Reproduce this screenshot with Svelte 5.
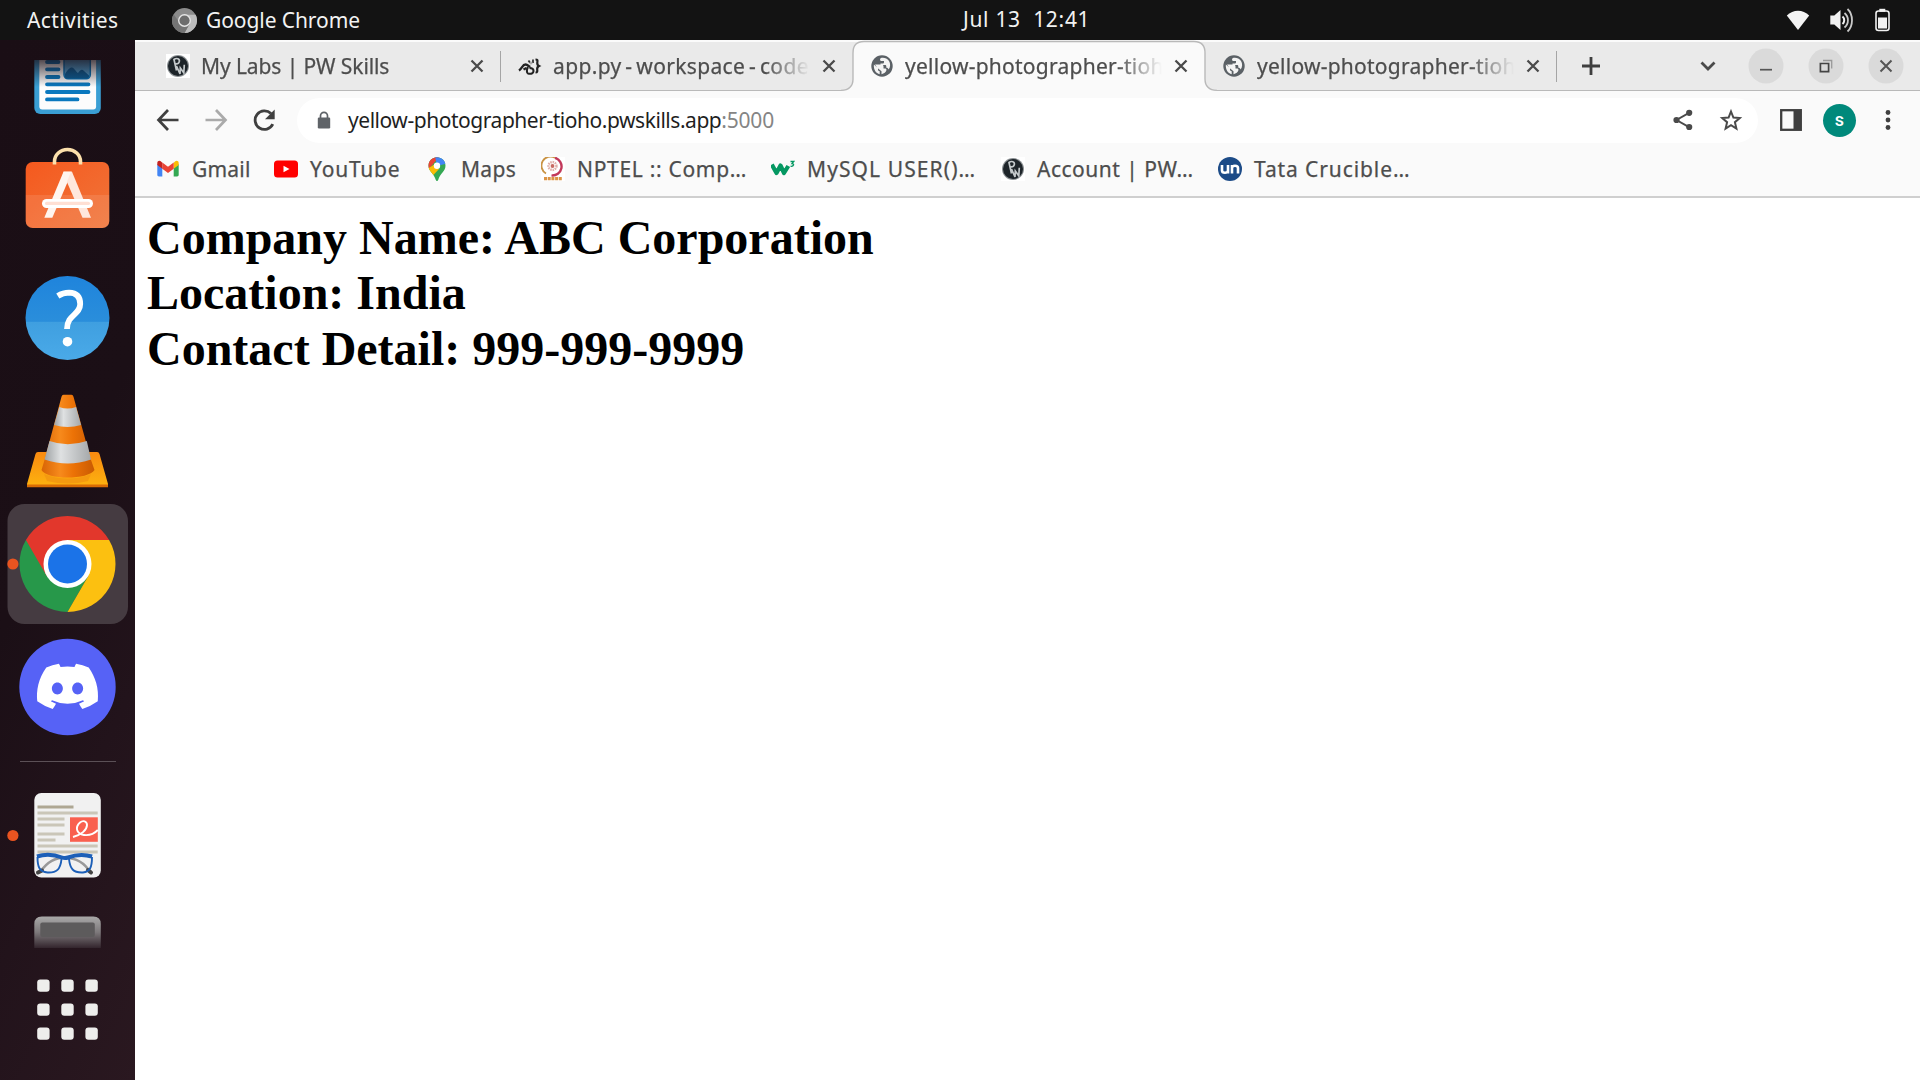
<script>
  const tabs = [
    { title: 'My Labs | PW Skills', icon: 'pw', cls: 'labs' },
    { title: 'app.py - workspace - code', icon: 'code', cls: 'code' },
    { title: 'yellow-photographer-tioh', icon: 'globe', cls: 'yellow', active: true },
    { title: 'yellow-photographer-tioh', icon: 'globe', cls: 'yellow' }
  ];
  const bookmarks = [
    { title: 'Gmail', icon: 'gmail' },
    { title: 'YouTube', icon: 'youtube' },
    { title: 'Maps', icon: 'maps' },
    { title: 'NPTEL :: Comp…', icon: 'nptel' },
    { title: 'MySQL USER()…', icon: 'w3' },
    { title: 'Account | PW…', icon: 'pw' },
    { title: 'Tata Crucible…', icon: 'un' }
  ];
  const gridX = [43.4, 67.5, 91.6];
  const gridY = [36.6, 60.6, 84.6];
</script>

{#snippet site(name)}
  <svg class="fav" viewBox="0 0 24 24">
    {#if name === 'pw'}
      <rect width="24" height="24" fill="#fff" />
      <circle cx="12" cy="12" r="11" fill="#8d9295" />
      <circle cx="12" cy="12" r="10" fill="#1d2429" />
      <path d="M10.500 16.500 8 5.500C10.500 3.600 14 4.600 13.300 7.600c-.4 1.800-2 2.400-3.800 2.200M10.500 12l3.500 8 .3-6 3.500 4.800.5-8" fill="none" stroke="#c4c9cb" stroke-width="1.700" />
    {:else if name === 'code'}
      <path d="M1 16.500C4 14.500 4.500 10.500 7.500 10.500S10 13 12.500 12.500M5.500 15.500l3-1.500" fill="none" stroke="#222" stroke-width="2.300" />
      <path d="M10 13c-1.500 2-1.500 6 0 6.500 3 .8 5.500 0 5.500-2.500s-2-3-4-3" fill="none" stroke="#222" stroke-width="2.100" />
      <path d="M17.500 5.500c2.500 0 2 1 1.800 3s-.3 2.500 1.700 3.500c-2 1-2 2-1.800 3.500s.3 3-1.700 3" fill="none" stroke="#222" stroke-width="2.200" />
      <path d="M10.500 6.500l1.500 2.200M15 5.500v3.500" stroke="#333" stroke-width="1.800" />
      <circle cx="13" cy="9" r="1.500" fill="#aaa" />
    {:else if name === 'globe'}
      <circle cx="12" cy="12" r="10.700" fill="#5b6166" />
      <path d="M10.500 4.200c3-1 6.500 0 8.500 2.800 1.600 2.500 1.500 6-.3 8.500-.5-1.200-1.200-1.700-2.400-1.700v-1.500c0-.8-.5-1.300-1.300-1.300h-4.500V9.500h2.200c.7 0 1.300-.6 1.300-1.300V7h-2.500c-1 0-1.500-.7-1.500-1.500z" fill="#f4f4f4" />
      <path d="M3.900 10.500 8 14.300v1.200c0 1 .8 1.700 1.700 1.700v3C6 19.500 3.300 15.500 3.900 10.500zM5 10.500h6.500c1.300 0 2 .8 2 2v2h1.500c1 0 1.500.7 1.500 1.600-.5 2-2.500 3.700-5 4.100v-3l-4-3.200z" fill="#f4f4f4" />
    {:else if name === 'gmail'}
      <path d="M1.300 7v10.700c0 1 .7 1.700 1.600 1.700h3.400V10.500z" fill="#4285f4" />
      <path d="M22.700 7v10.700c0 1-.7 1.700-1.600 1.700h-3.400V10.500z" fill="#34a853" />
      <path d="M17.700 5.800v6l5-3.800V6c0-2-2.200-2.800-3.700-1.600z" fill="#fbbc04" />
      <path d="M6.300 11.800V5.500L12 9.800l5.700-4.300v6.300L12 16z" fill="#ea4335" />
      <path d="M1.300 6v2l5 3.800v-6L5 4.400C3.500 3.200 1.300 4 1.300 6z" fill="#c5221f" />
    {:else if name === 'youtube'}
      <rect x="0" y="3.500" width="24" height="17" rx="3.500" fill="#f00" />
      <path d="M9.500 8.800v6.400l6-3.200z" fill="#fff" />
    {:else if name === 'maps'}
      <clipPath id="pin"><path d="M12 .3c5 0 8.500 3.700 8.500 8.400 0 6-5.500 7.500-7.300 14.300-.4 1.300-2 1.300-2.400 0C9 16.200 3.500 14.700 3.500 8.700 3.500 4 7 .3 12 .3z" /></clipPath>
      <g clip-path="url(#pin)">
        <rect width="24" height="24" fill="#34a853" />
        <path d="M0 0h14L3 13 0 10z" fill="#ea4335" />
        <path d="M10-1 24 0v6L12 9z" fill="#4285f4" />
        <path d="M2 12 10 7l4 5-7.500 8z" fill="#fbbc04" />
      </g>
      <circle cx="12" cy="8.800" r="3.200" fill="#fff" />
    {:else if name === 'nptel'}
      <rect width="24" height="24" fill="#fff" />
      <path d="M5 16.500A9 9 0 0 1 14 .8" fill="none" stroke="#c99344" stroke-width="1.900" />
      <path d="M14 .8a9 9 0 0 1-3.500 17.600" fill="none" stroke="#c2385a" stroke-width="2.400" />
      <circle cx="11.500" cy="9" r="4" fill="none" stroke="#dfb0aa" stroke-width="2.400" stroke-dasharray="1.500 .8" />
      <circle cx="11.500" cy="9" r="1.900" fill="#c86a62" />
      <path d="M3 21.700h18" stroke="#dc9445" stroke-width="3.200" stroke-dasharray="3 .7" />
    {:else if name === 'w3'}
      <path d="M.8 7.500 5.500 16l4-7.500 3.500 7.500 4.300-7" fill="none" stroke="#059862" stroke-width="4.200" stroke-linejoin="round" />
      <path d="M19.500 4.500h3.200l-1.700 2c2.500 0 2 3.300-1.500 2.700" fill="none" stroke="#059862" stroke-width="1.300" />
    {:else if name === 'un'}
      <circle cx="12" cy="12" r="12" fill="#1c4b87" />
      <path d="M4 8v5.500c0 3 6 3 6 0V8v8.500M14 16.500V8v3c0-3 6-3 6 0v5.500" fill="none" stroke="#fff" stroke-width="2.600" />
    {/if}
  </svg>
{/snippet}

{#snippet cross()}
  <svg class="cross" viewBox="0 0 14 14"><path d="M1.500 1.500l11 11M12.500 1.500l-11 11" /></svg>
{/snippet}

<div class="desktop">
  <header class="topbar">
    <span class="activities">Activities</span>
    <svg class="appicon" viewBox="0 0 24 24">
      <circle cx="12" cy="12" r="12" fill="#8b8b8b" />
      <path d="M12 6.500h10.700A12 12 0 0 1 12 24l5-9z" fill="#bcbcbc" />
      <path d="M1.600 6A12 12 0 0 0 12 24l5-9-10-1z" fill="#747474" />
      <circle cx="12" cy="12" r="6.200" fill="#e6e6e6" />
      <circle cx="12" cy="12" r="4.900" fill="#6d6d6d" />
    </svg>
    <span class="appname">Google Chrome</span>
    <span class="clock">Jul 13&nbsp; 12:41</span>
    <div class="status">
      <svg width="24" height="24" viewBox="0 0 24 24"><path d="M.8 7.500C7 1 17 1 23.200 7.500L12 22z" fill="#f4f4f4" /></svg>
      <svg width="26" height="26" viewBox="0 0 26 26">
        <path d="M1.300 8.500h4L11.500 3v20l-6.200-5.500h-4z" fill="#f2f2f2" />
        <path d="M13.500 9.500c2.300 2 2.300 5.500 0 7.500" fill="none" stroke="#f2f2f2" stroke-width="2" />
        <path d="M15.500 6c4.600 3.800 4.600 10.600 0 14.500M18.500 2c6 5.500 6 17 0 22.500" fill="none" stroke="#c9c9c9" stroke-width="1.800" />
      </svg>
      <svg width="18" height="24" viewBox="0 0 18 24">
        <rect x="5.300" y=".8" width="6" height="3" fill="#f2f2f2" />
        <rect x="2" y="3" width="13" height="19.500" rx="2.500" fill="none" stroke="#f2f2f2" stroke-width="1.600" />
        <rect x="4" y="9.500" width="9" height="11" fill="#f2f2f2" />
      </svg>
    </div>
  </header>

  <nav class="dock">
    <svg width="135" height="94" viewBox="0 0 135 94">
      <defs>
        <linearGradient id="fadeTop" x1="0" y1="0" x2="0" y2="1">
          <stop offset="0" stop-color="#1a0e15" stop-opacity=".75" />
          <stop offset="1" stop-color="#1a0e15" stop-opacity="0" />
        </linearGradient>
        <clipPath id="cutTop"><rect y="20" width="135" height="74" /></clipPath>
      </defs>
      <g clip-path="url(#cutTop)">
        <rect x="34.300" y="0" width="66.500" height="74" rx="6" fill="#3a9fd4" />
        <rect x="39.300" y="0" width="56.800" height="69.500" rx="3" fill="#fcfcfc" />
        <rect x="64" y="10" width="26.300" height="28.800" rx="4" fill="#4f9fd0" stroke="#0577bd" stroke-width="1.500" />
        <path d="M65 34c3-5 5-6.500 7-6.500s4 4.500 6 5.500c2-3 4-4.500 6-2l5 4.500v1.500q-1 1.500-3 1.500H67q-2 0-2-1.500z" fill="#0a5f99" />
        <path d="M47 22h11.500M47 29.300h11.500M47 37h11.500M47 44.300h41.500M47 52h41.500M47 59.400h30.500" stroke="#0a78be" stroke-width="3.800" stroke-linecap="round" />
        <rect x="33" y="20" width="70" height="27" fill="url(#fadeTop)" />
      </g>
    </svg>

    <svg width="135" height="123" viewBox="0 0 135 123">
      <defs>
        <linearGradient id="bag" x1="0" y1="0" x2="1" y2="1">
          <stop offset="0" stop-color="#f5591e" />
          <stop offset="1" stop-color="#f0753a" />
        </linearGradient>
      </defs>
      <rect x="25.700" y="28" width="83.600" height="66" rx="7" fill="url(#bag)" />
      <path d="M25.700 61h83.600v26q0 7-7 7H32.700q-7 0-7-7z" fill="#fff" opacity=".1" />
      <path d="M54.500 30.500V27.500a13 12 0 0 1 26 0v3" fill="none" stroke="#fce0ac" stroke-width="3.600" />
      <path d="M63.500 37.800H72L52.300 83.800H44.300z" fill="#fff5ef" />
      <path d="M65 43.500 63.500 37.800H72L91 83.800H82.500z" fill="#ffe7dc" />
      <path d="M63.500 37.800H71L66 50z" fill="#fff5ef" />
      <rect x="42" y="65" width="51" height="9" rx="4.500" fill="#fff" />
      <rect x="45" y="67.700" width="45" height="3.300" rx="1.600" fill="#ffdfd3" />
    </svg>

    <svg width="135" height="123" viewBox="0 0 135 123">
      <defs>
        <linearGradient id="help" x1="0" y1="0" x2="0" y2="1">
          <stop offset="0" stop-color="#1f84dc" />
          <stop offset=".54" stop-color="#2a8edb" />
          <stop offset=".55" stop-color="#3f9fe0" />
          <stop offset="1" stop-color="#4aaae8" />
        </linearGradient>
      </defs>
      <circle cx="67.500" cy="61" r="42" fill="url(#help)" />
      <path d="M57.800 39Q63 35.700 69 35.700 80.200 36 80.200 47C80.200 58 67 57.500 67 72" fill="none" stroke="#fff" stroke-width="5.800" />
      <circle cx="67.500" cy="84.700" r="4.800" fill="#fff" />
    </svg>

    <svg width="135" height="123" viewBox="0 0 135 123">
      <defs>
        <linearGradient id="cone" x1="0" x2="1">
          <stop offset="0" stop-color="#d86405" />
          <stop offset=".35" stop-color="#f78a1c" />
          <stop offset=".6" stop-color="#ec7206" />
          <stop offset="1" stop-color="#c85a02" />
        </linearGradient>
        <linearGradient id="band" x1="0" x2="1">
          <stop offset="0" stop-color="#9ea2a4" />
          <stop offset=".35" stop-color="#dfe1e2" />
          <stop offset="1" stop-color="#a5a8aa" />
        </linearGradient>
        <linearGradient id="plinth" x1="0" y1="0" x2="0" y2="1">
          <stop offset="0" stop-color="#f88a10" />
          <stop offset="1" stop-color="#fdb30f" />
        </linearGradient>
      </defs>
      <path d="M38 72h59q2 0 2.500 2L108 104v3H27v-3L35.500 74q.5-2 2.500-2z" fill="url(#plinth)" />
      <path d="M27 104.500h81v2.700H27z" fill="#d96c04" />
      <path d="M44 94q23.500 9 47 0l-3 7q-20 5-41 0z" fill="#f49a10" />
      <path d="M63.500 14.700h8q1.500 0 2 2L91 80l3.500 10c-6 10-48 10-53 0L44.500 80 61.500 16.700q.5-2 2-2z" fill="url(#cone)" />
      <path d="M59.300 27q8 3 16.800 0l5 18q-13.500 4-27 0z" fill="url(#band)" />
      <path d="M49.500 61q18 6.500 37.300 0l4.200 18.500q-23 8-46.500 0z" fill="url(#band)" />
    </svg>

    <svg width="135" height="123" viewBox="0 0 135 123">
      <rect x="7.500" y="1" width="120.500" height="120" rx="17" fill="#453b41" />
      <circle cx="12.900" cy="61" r="5.600" fill="#e95420" />
      <path d="M67.500 61 25.930 37A48 48 0 0 0 67.500 109L88.300 73z" fill="#27984a" />
      <path d="M67.500 61 88.300 73 67.500 109A48 48 0 0 0 109.070 37H67.500z" fill="#fcc010" />
      <path d="M67.500 37h41.570A48 48 0 0 0 25.930 37L46.700 73 67.500 61z" fill="#e2372c" />
      <circle cx="67.500" cy="61" r="24" fill="#fff" />
      <circle cx="67.500" cy="61" r="19.500" fill="#1b73e8" />
    </svg>

    <svg width="135" height="123" viewBox="0 0 135 123">
      <circle cx="67.500" cy="61" r="48.200" fill="#5662f6" />
      <path transform="translate(37 37.700) scale(.48 .469)" fill="#fff" d="M107.700,8.070A105.150,105.150,0,0,0,81.470,0a72.060,72.060,0,0,0-3.360,6.830A97.680,97.680,0,0,0,49,6.830,72.370,72.370,0,0,0,45.640,0,105.890,105.890,0,0,0,19.390,8.090C2.790,32.650-1.710,56.600.54,80.210h0A105.730,105.730,0,0,0,32.710,96.360,77.700,77.700,0,0,0,39.600,85.250a68.420,68.420,0,0,1-10.850-5.180c.91-.66,1.800-1.340,2.660-2a75.570,75.570,0,0,0,64.320,0c.87.71,1.760,1.390,2.660,2a68.680,68.680,0,0,1-10.870,5.190,77,77,0,0,0,6.890,11.100A105.250,105.250,0,0,0,126.600,80.220h0C129.240,52.840,122.090,29.110,107.700,8.070ZM42.450,65.690C36.180,65.690,31,60,31,53s5-12.740,11.430-12.740S54,46,53.890,53,48.840,65.690,42.450,65.690Zm42.240,0C78.410,65.690,73.250,60,73.250,53s5-12.740,11.440-12.740S96.230,46,96.120,53,91.080,65.690,84.690,65.690Z" />
    </svg>

    <hr />

    <svg width="135" height="123" viewBox="0 0 135 123">
      <circle cx="12.900" cy="62.500" r="5.600" fill="#e95420" />
      <rect x="34.300" y="20" width="66.500" height="84.500" rx="7" fill="#f1f1f1" />
      <path d="M37.500 34h36" stroke="#aea793" stroke-width="3" />
      <path d="M37.500 40h60.200M37.500 46h27M37.500 52h27M37.500 61h27M37.500 67h18M37.500 73h60.200M37.500 79h60.200" stroke="#cac6b8" stroke-width="3" />
      <rect x="70" y="44.300" width="27.800" height="24.500" fill="#f9604f" />
      <path d="M73 64c8-2 14-7 14-12 0-4-4-5-7-2.500-5 4.500-4 11.500 4 12.500 5 .6 10-1 13.800-5" fill="none" stroke="#fff" stroke-width="1.900" />
      <path d="M40 99C48 88 55 85 65 84.500M90 99C84 89 76 85 65 84.500" fill="none" stroke="#999" stroke-width="2.500" />
      <path d="M38 99.500l4-2M88 97l3 2.500" stroke="#444" stroke-width="4" stroke-linecap="round" />
      <path d="M37 83.500c8-2.500 17-2 25 1 2 .7 4 .7 6 0 8-3 16-3.500 24-1" fill="none" stroke="#1c5fb8" stroke-width="4" />
      <path d="M37.500 84c0 10 2 15 10 15.500 9 .5 13-3 14-13.500M92 84c0 10-2 15-9 15.500-10 .5-13-4-14-13.500" fill="none" stroke="#1c5fb8" stroke-width="1.900" />
    </svg>

    <svg width="135" height="53" viewBox="0 0 135 53">
      <defs>
        <linearGradient id="disk" x1="0" y1="0" x2="0" y2="1">
          <stop offset="0" stop-color="#a9a8a8" />
          <stop offset=".5" stop-color="#7d797b" />
          <stop offset="1" stop-color="#33252d" />
        </linearGradient>
      </defs>
      <path d="M34.300 52V28q0-7.500 7.500-7.500h51.500q7.500 0 7.500 7.500v24z" fill="url(#disk)" />
      <rect x="40.300" y="26.500" width="54.500" height="14.500" rx="2" fill="#5d5b5c" />
    </svg>

    <svg width="135" height="130" viewBox="0 0 135 130">
      {#each gridY as y}
        {#each gridX as x}
          <rect x={x - 6.2} y={y - 6.2} width="12.400" height="12.400" rx="3" fill="#eeeeec" />
        {/each}
      {/each}
    </svg>
  </nav>

  <main class="browser">
    <div class="tabstrip">
      {#each tabs as tab, i}
        <div class={['tab', tab.active && 'active', (i === 0 || i === 3) && 'divided']}>
          {#if tab.active}
            <svg class="shape" viewBox="0 0 376 52">
              <path d="M0 50.400Q12 50 12 39V13Q12 1.500 23 1.500H353Q364 1.500 364 13V39Q364 50 376 50.400V52H0z" fill="#fafafa" />
              <path d="M0 50.400Q12 50 12 39V13Q12 1.500 23 1.500H353Q364 1.500 364 13V39Q364 50 376 50.400" fill="none" stroke="#b9b9b9" stroke-width="1.400" />
            </svg>
          {/if}
          {@render site(tab.icon)}
          <span class={['title', tab.cls]}>{tab.title}</span>
          {@render cross()}
        </div>
      {/each}
      <svg class="plus" viewBox="0 0 20 20"><path d="M10 1v18M1 10h18" /></svg>
      <svg class="chevron" viewBox="0 0 18 12"><path d="M2.500 2.500 9 9l6.500-6.500" /></svg>
      <div class="controls">
        <svg viewBox="0 0 36 36"><circle cx="18" cy="18" r="17.500" fill="#dadada" /><path d="M12 21.700h12" stroke="#555" stroke-width="1.700" /></svg>
        <svg viewBox="0 0 36 36"><circle cx="18" cy="18" r="17.500" fill="#dadada" /><path d="M12.400 15.500h8.200v8.200h-8.200z" fill="none" stroke="#444" stroke-width="1.700" /><path d="M15 12.500h8.700v8" fill="none" stroke="#999" stroke-width="1.300" /></svg>
        <svg viewBox="0 0 36 36"><circle cx="18" cy="18" r="17.500" fill="#dadada" /><path d="M12.500 12.500l11 11M23.500 12.500l-11 11" stroke="#555" stroke-width="2" /></svg>
      </div>
    </div>

    <div class="toolbar">
      <svg class="nav" viewBox="0 0 24 24"><path d="M22.500 12H3M12 2 2.500 12 12 22" fill="none" stroke="#3f3f3f" stroke-width="2.700" /></svg>
      <svg class="nav" viewBox="0 0 24 24"><path d="M1.500 12H21M12 2l9.500 10L12 22" fill="none" stroke="#aaa" stroke-width="2.700" /></svg>
      <svg class="nav" viewBox="0 0 24 24"><path d="M20.800 16.200A9.300 9.300 0 1 1 19 5.500" fill="none" stroke="#3f3f3f" stroke-width="2.800" /><path d="M22.700 1.500v9.700H13z" fill="#3f3f3f" /></svg>
      <div class="omnibox">
        <svg class="lock" viewBox="0 0 14 18"><path d="M3.500 8V4.800a3.500 3.500 0 0 1 7 0V8" fill="none" stroke="#5f6368" stroke-width="1.700" /><rect x=".8" y="6.500" width="12.400" height="11" rx="1.200" fill="#5f6368" /></svg>
        <span class="url">yellow-photographer-tioho.pwskills.app<span class="port">:5000</span></span>
        <svg class="act" viewBox="0 0 24 24"><path d="M18.500 4.700 5.500 12l13 7.300" fill="none" stroke="#4a4a4a" stroke-width="1.900" /><circle cx="18.200" cy="4.800" r="3.100" fill="#4a4a4a" /><circle cx="5.500" cy="12" r="3.100" fill="#4a4a4a" /><circle cx="18.200" cy="19" r="3.100" fill="#4a4a4a" /></svg>
        <svg class="act" viewBox="0 0 24 24"><path d="M12 3.500l2.400 6 6.400.5-4.900 4.200 1.500 6.300-5.400-3.400-5.400 3.400 1.500-6.300L3.200 10l6.400-.5z" fill="none" stroke="#4a4a4a" stroke-width="2" /></svg>
      </div>
      <svg class="panel" viewBox="0 0 24 24"><rect x="2.200" y="2.200" width="19.600" height="19.600" fill="#fafafa" stroke="#3f3f3f" stroke-width="2.300" /><rect x="14.500" y="2" width="7.500" height="20" fill="#3f3f3f" /></svg>
      <span class="avatar">s</span>
      <svg class="dots" viewBox="0 0 6 24"><circle cx="3" cy="4.500" r="2.400" /><circle cx="3" cy="12" r="2.400" /><circle cx="3" cy="19.500" r="2.400" /></svg>
    </div>

    <div class="bookmarks">
      {#each bookmarks as mark}
        <div class={['mark', `mark-${mark.icon}`]}>
          {@render site(mark.icon)}
          <span>{mark.title}</span>
        </div>
      {/each}
    </div>

    <h1 class="page">Company Name: ABC Corporation<br />Location: India<br />Contact Detail: 999-999-9999</h1>
  </main>
</div>

<style>
  :global(body) { margin: 0; }
  .desktop {
    display: grid;
    grid-template: 40px 1040px / 135px 1785px;
    width: 1920px;
    height: 1080px;
    overflow: hidden;
    font: 21px/30px 'Noto Sans', sans-serif;
    white-space: pre;
  }
  svg { display: block; flex: none; }
  .topbar {
    grid-column: 1 / 3;
    display: flex;
    align-items: center;
    background: #131313;
    color: #f2f2f2;
  }
  .activities { width: 145px; padding-left: 27px; letter-spacing: .4px; }
  .appicon { width: 25px; height: 25px; }
  .appname { width: 756px; margin-left: 9px; letter-spacing: -.08px; }
  .clock { width: 200px; padding: 0 0 2px 1px; letter-spacing: .7px; }
  .status { display: flex; align-items: center; gap: 19px; margin-left: auto; padding: 0 28px 1px 0; }
  .dock {
    display: flex;
    flex-direction: column;
    background: linear-gradient(115deg, #1a0e15 0%, #1b0f16 45%, #22131b 70%, #2a1820 100%);
  }
  hr { width: 96px; height: 1px; margin: 12px auto 11px; border: 0; background: #5b5056; }
  .browser { background: #fff; white-space: normal; }
  .tabstrip {
    display: flex;
    align-items: center;
    height: 51px;
    box-sizing: border-box;
    border-top: 2px solid #fbfbfb;
    border-bottom: 1px solid #b9b9b9;
    background: #eaeaea;
    padding-left: 14px;
    color: #4d4d4d;
    -webkit-text-stroke: .25px #4d4d4d;
  }
  .tab { position: relative; display: flex; align-items: center; width: 352px; height: 48px; box-sizing: border-box; padding-left: 16px; }
  .divided::after { content: ''; width: 1.5px; height: 31px; margin-left: 16px; background: #a5a5a5; }
  .shape { position: absolute; left: -12px; top: -2px; width: 376px; height: 52px; }
  .fav { position: relative; width: 24px; height: 24px; }
  .tab .fav { margin-right: -1px; margin-left: 1px; }
  .title {
    position: relative;
    width: 257px;
    margin-left: 12px;
    overflow: hidden;
    white-space: pre;
    letter-spacing: .25px;
    mask-image: linear-gradient(90deg, #000 212px, transparent 257px);
  }
  .labs { letter-spacing: -.1px; }
  .code { letter-spacing: .35px; word-spacing: -2px; }
  .cross { position: relative; width: 14px; height: 14px; margin-left: 12px; stroke: #4a4a4a; stroke-width: 2.3; }
  .plus { width: 20px; height: 20px; margin-left: 24px; stroke: #3f3f3f; stroke-width: 2.800; }
  .chevron { width: 18px; height: 12px; margin-left: 98px; fill: none; stroke: #4a4a4a; stroke-width: 2.800; }
  .controls { display: flex; gap: 24px; margin-left: 31px; }
  .controls svg { width: 36px; height: 36px; }
  .toolbar { display: flex; align-items: center; height: 58px; background: #fafafa; padding-left: 21px; }
  .nav { width: 24px; height: 24px; margin-right: 24px; }
  .omnibox { display: flex; align-items: center; width: 1461px; height: 45px; box-sizing: border-box; margin-left: -3px; padding: 0 15px 0 20px; border-radius: 23px; background: #fff; }
  .lock { width: 14px; height: 18px; }
  .url { margin: 0 auto 0 17px; color: #1f1f1f; letter-spacing: -.46px; }
  .port { color: #858585; letter-spacing: -.2px; }
  .act { width: 24px; height: 24px; margin-left: 24px; }
  .panel { width: 24px; height: 24px; margin-left: 21px; }
  .avatar { width: 33px; height: 33px; margin-left: 20px; border-radius: 50%; background: #00897b; color: #fff; font: 500 18px/32px Roboto, sans-serif; text-align: center; }
  .dots { width: 6px; height: 24px; margin-left: 29px; fill: #3f3f3f; }
  .bookmarks { display: flex; align-items: center; height: 49px; box-sizing: border-box; padding: 0 0 8px 21px; border-bottom: 2px solid #cfcfcf; background: #fafafa; color: #4d4d4d; -webkit-text-stroke: .25px #4d4d4d; }
  .mark { display: flex; align-items: center; gap: 12px; white-space: pre; }
  .mark-gmail { width: 118px; letter-spacing: .2px; }
  .mark-youtube { width: 151px; letter-spacing: .8px; }
  .mark-maps { width: 116px; letter-spacing: .3px; }
  .mark-nptel { width: 230px; letter-spacing: .7px; }
  .mark-w3 { width: 230px; letter-spacing: 1.100px; }
  .mark-pw { width: 217px; letter-spacing: .5px; }
  .mark-un { letter-spacing: .9px; }
  .page { margin: 0; padding: 12px 0 0 12px; color: #000; font: bold 48px/55.4px 'Liberation Serif', serif; }
</style>
